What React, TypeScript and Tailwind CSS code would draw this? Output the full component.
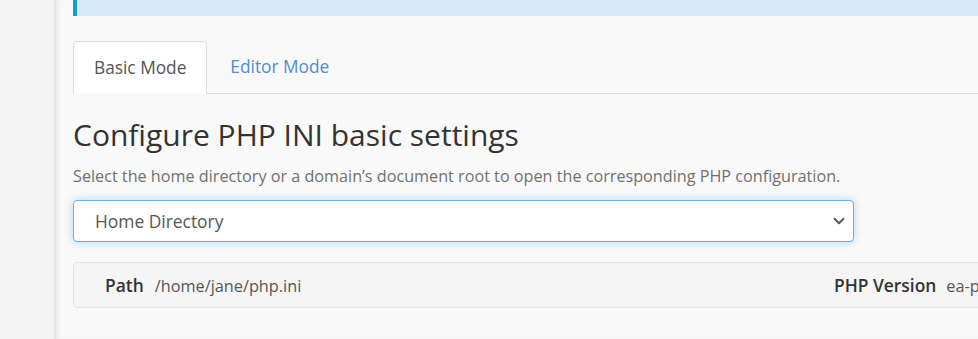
import { ChevronDown } from "lucide-react";

export default function App() {
  return (
    <div className="flex h-[339px] w-[978px] overflow-hidden font-['Open_Sans',sans-serif] text-[#333]">
      <aside className="w-[54px] shrink-0 bg-[#f3f3f3]" />
      <main className="relative flex-1 overflow-hidden bg-[#f9f9f9] pl-[19px] shadow-[inset_6px_0_6px_-4px_rgba(0,0,0,0.12)]">
        {/* info alert, mostly scrolled out of view */}
        <div className="h-[16px] border-l-4 border-[#179bd7] bg-[#d6ebf8]" />

        <div className="mt-[25px] flex border-b border-[#dddddd]">
          <button className="-mb-px h-[53px] rounded-t-[4px] border border-b-0 border-[#dddddd] bg-white px-[20px] text-[17.3px] text-[#555]">
            Basic Mode
          </button>
          <button className="h-[52px] px-[23px] text-[17.3px] text-[#4a8fd1]">Editor Mode</button>
        </div>

        <h1 className="mt-[21px] text-[30px] leading-[40px] text-[#333]">Configure PHP INI basic settings</h1>
        <p className="mt-[10px] text-[16.2px] leading-[22px] text-[#707070]">
          Select the home directory or a domain’s document root to open the corresponding PHP configuration.
        </p>

        <div className="mt-[13px] flex h-[42px] w-[781px] items-center justify-between rounded-[4px] border border-[#66afe9] bg-white pl-[21px] pr-[5px] shadow-[0_0_8px_rgba(102,175,233,0.45)]">
          <span className="text-[17.4px] text-[#555]">Home Directory</span>
          <ChevronDown className="h-[18px] w-[18px] text-[#555]" strokeWidth={2.5} />
        </div>

        <div className="mt-[20px] grid h-[46px] w-[1040px] grid-cols-[729px_auto] items-center rounded-[4px] border border-[#e3e3e3] bg-[#f5f5f5] pl-[31px] text-[16.3px]">
          <div>
            <span className="text-[17.4px] font-semibold text-[#333]">Path</span>
            <span className="ml-[11px] text-[#555]">/home/jane/php.ini</span>
          </div>
          <div>
            <span className="text-[17.4px] font-semibold text-[#333]">PHP Version</span>
            <span className="ml-[10px] text-[#555]">ea-php81</span>
          </div>
        </div>
      </main>
    </div>
  );
}
